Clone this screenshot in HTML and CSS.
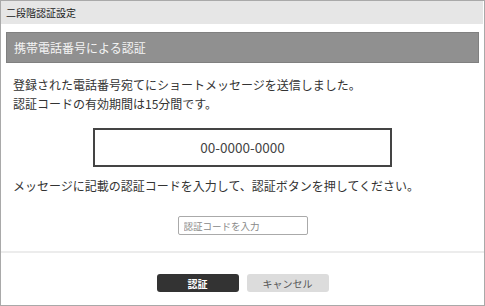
FILE: index.html
```html
<!DOCTYPE html>
<html lang="ja">
<head>
  <meta charset="UTF-8" />
  <title>二段階認証設定</title>
  <meta name="viewport" content="width=device-width, initial-scale=1" />
  <link rel="stylesheet" href="styles.css">
</head>
<body>
  <div class="dialog">
    <div class="dialog-title">二段階認証設定</div>

    <div class="dialog-body">
      <h2 class="section-title">携帯電話番号による認証</h2>

      <p class="message">
        登録された電話番号宛てにショートメッセージを送信しました。<br>
        認証コードの有効期間は15分間です。
      </p>

      <div class="phone-box">00-0000-0000</div>

      <p class="instruction">メッセージに記載の認証コードを入力して、認証ボタンを押してください。</p>

      <div class="code-row">
        <input type="text" class="code-input" placeholder="認証コードを入力" />
      </div>
    </div>

    <div class="dialog-footer">
      <button class="btn btn-primary">認証</button>
      <button class="btn btn-cancel">キャンセル</button>
    </div>
  </div>
</body>
</html>
```

FILE: styles.css
```css
* {
  box-sizing: border-box;
}
body {
  margin: 0;
  font-family: "Noto Sans CJK JP", "Noto Sans", sans-serif;
  color: #333;
  background: #fff;
}
.dialog {
  width: 485px;
  height: 306px;
  border: 1px solid #a9a9a9;
  display: flex;
  flex-direction: column;
}
.dialog-title {
  height: 23px;
  margin-right: 1px;
  background: #e6e6e6;
  font-size: 10px;
  line-height: 23px;
  padding-left: 5px;
  color: #222;
}
.dialog-body {
  flex: 1;
  padding: 8px 5px 0 5px;
}
.section-title {
  margin: 0;
  height: 31px;
  background: #909090;
  border: 1px solid #808080;
  color: #f4f4f4;
  font-size: 12px;
  font-weight: normal;
  line-height: 29px;
  padding-left: 7px;
}
.message {
  margin: 12px 0 0 7px;
  font-size: 12px;
  line-height: 19px;
}
.phone-box {
  width: 299px;
  height: 39px;
  margin: 15px auto 0;
  border: 2px solid #444;
  text-align: center;
  font-size: 13.5px;
  line-height: 35px;
  color: #444;
}
.instruction {
  margin: 9px 0 0 7px;
  font-size: 12px;
  line-height: 19px;
}
.code-row {
  display: flex;
  justify-content: center;
  margin-top: 21px;
}
.code-input {
  width: 130px;
  height: 19px;
  border: 1px solid #aaa;
  border-radius: 2px;
  padding: 0 5px;
  font-family: inherit;
  font-size: 9.5px;
  outline: none;
}
.code-input::placeholder {
  color: #888;
}
.dialog-footer {
  height: 54px;
  border-top: 2px solid #ececec;
  display: flex;
  justify-content: center;
  gap: 8px;
  padding-top: 21px;
}
.btn {
  width: 82px;
  height: 18px;
  border: none;
  border-radius: 3px;
  font-family: inherit;
  font-size: 10px;
  padding: 0;
}
.btn-primary {
  background: #333;
  color: #fff;
  font-weight: bold;
}
.btn-cancel {
  background: #dcdcdc;
  color: #555;
}
```
